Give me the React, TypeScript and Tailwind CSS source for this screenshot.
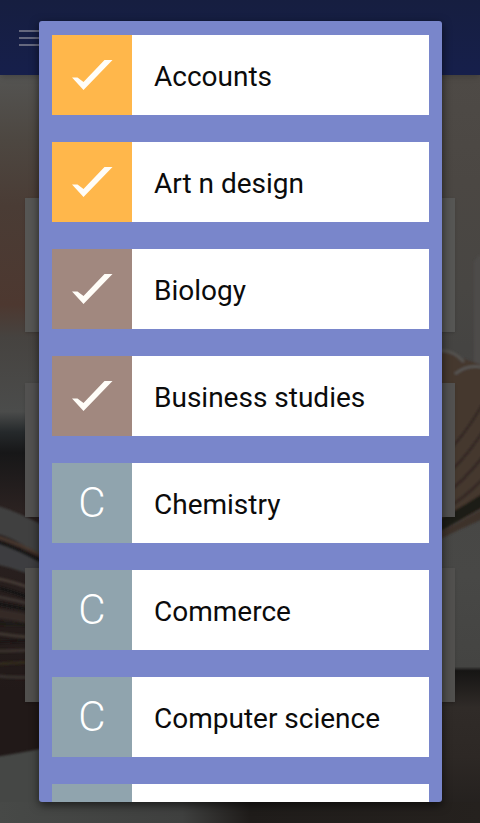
import { useState } from 'react';

interface Subject {
    name: string;
    letter: string;
    color: string;
    checked: boolean;
}

const initialSubjects: Subject[] = [
    { name: 'Accounts', letter: 'A', color: 'bg-[#ffb74b]', checked: true },
    { name: 'Art n design', letter: 'A', color: 'bg-[#ffb74b]', checked: true },
    { name: 'Biology', letter: 'B', color: 'bg-[#a1887f]', checked: true },
    { name: 'Business studies', letter: 'B', color: 'bg-[#a1887f]', checked: true },
    { name: 'Chemistry', letter: 'C', color: 'bg-[#90a4ae]', checked: false },
    { name: 'Commerce', letter: 'C', color: 'bg-[#90a4ae]', checked: false },
    { name: 'Computer science', letter: 'C', color: 'bg-[#90a4ae]', checked: false },
    { name: '', letter: '', color: 'bg-[#90a4ae]', checked: false },
];

const CheckIcon = () => (
    <svg className="w-20 h-20" viewBox="0 0 80 80" fill="#fffdf8" aria-hidden="true">
        <path d="M20 42.5H25.5L31.5 47L52.5 25H60.5L31.5 55Z" />
    </svg>
);

// open book lying on a table, out of focus
const BookBackdrop = () => (
    <svg className="absolute inset-0 w-full h-full" viewBox="0 0 480 823" preserveAspectRatio="none" aria-hidden="true">
        <defs>
            <linearGradient id="wallLeft" x1="0" y1="0" x2="0" y2="1">
                <stop offset="0.09" stopColor="#545452" />
                <stop offset="0.17" stopColor="#4d4741" />
                <stop offset="0.25" stopColor="#4a3c35" />
                <stop offset="0.37" stopColor="#4d3830" />
                <stop offset="0.41" stopColor="#464340" />
                <stop offset="0.5" stopColor="#4b4c4b" />
                <stop offset="0.525" stopColor="#25292b" />
                <stop offset="0.55" stopColor="#171718" />
                <stop offset="0.62" stopColor="#2b2221" />
                <stop offset="0.84" stopColor="#211918" />
                <stop offset="0.93" stopColor="#211918" />
            </linearGradient>
            <linearGradient id="wallRight" x1="0" y1="0" x2="0" y2="1">
                <stop offset="0.09" stopColor="#4e4a46" />
                <stop offset="0.22" stopColor="#4b4743" />
                <stop offset="0.35" stopColor="#484643" />
                <stop offset="0.42" stopColor="#454442" />
                <stop offset="0.7" stopColor="#484846" />
                <stop offset="0.81" stopColor="#444442" />
                <stop offset="0.815" stopColor="#161514" />
                <stop offset="0.86" stopColor="#302b28" />
                <stop offset="0.92" stopColor="#2d2825" />
                <stop offset="1" stopColor="#211e1c" />
            </linearGradient>
            <linearGradient id="table" x1="0" y1="0" x2="1" y2="0">
                <stop offset="0" stopColor="#474947" />
                <stop offset="0.38" stopColor="#3f403f" />
                <stop offset="0.52" stopColor="#1f1c1a" />
                <stop offset="1" stopColor="#25211e" />
            </linearGradient>
            <filter id="soft" x="-10%" y="-10%" width="120%" height="120%">
                <feGaussianBlur stdDeviation="1.2" />
            </filter>
        </defs>
        <rect width="240" height="823" fill="url(#wallLeft)" />
        <rect x="240" width="240" height="823" fill="url(#wallRight)" />
        <g filter="url(#soft)">
            <path d="M-5 505Q25 514 50 530V565Q22 540 -5 533Z" fill="#3f403f" />
            <path d="M-5 542Q22 550 50 568V583Q22 570 -5 564Z" fill="#3c3e3f" />
            <g fill="none" strokeWidth="3">
                <path d="M-5 536Q20 544 42 556" stroke="#48392f" />
                <path d="M-5 541Q20 549 42 562" stroke="#151414" />
                <path d="M-5 578Q15 582 30 588" stroke="#443b36" />
                <path d="M-5 587Q15 592 30 598" stroke="#161515" />
                <path d="M-5 596Q15 600 30 604" stroke="#3d3632" />
                <path d="M-5 603Q15 607 30 610" stroke="#171514" />
                <path d="M-5 613Q15 616 30 619" strokeWidth="9" stroke="#342b28" />
                <path d="M-5 624Q15 624 30 625" stroke="#1f1a19" />
                <path d="M-5 633Q15 636 30 637" stroke="#3f3731" />
                <path d="M-5 642Q15 641 30 640" stroke="#1a1716" />
                <path d="M-5 651Q15 651 30 650" stroke="#3b332d" />
                <path d="M-5 664Q15 663 30 662" stroke="#33291f" />
                <path d="M-5 676Q15 678 30 677" stroke="#38332e" />
            </g>
            <path d="M-5 757Q20 753 50 747L240 805V830H-5Z" fill="#444644" />
            <path d="M474 262Q478 254 485 254V430H474Z" fill="#4d4b49" />
            <path d="M438 350L485 366V506Q465 520 438 530Z" fill="#45372f" />
            <g fill="none" strokeWidth="3" stroke="#352a25">
                <path d="M438 462Q464 438 485 400" />
                <path d="M438 482Q464 462 485 428" />
                <path d="M438 500Q464 482 485 454" />
                <path d="M438 514Q464 499 485 477" />
            </g>
            <path d="M440 351Q452 349 464 362" fill="none" stroke="#55524f" strokeWidth="3" />
            <path d="M455 374Q468 363 485 368" fill="none" stroke="#575552" strokeWidth="3" />
            <path d="M438 520Q462 507 485 492V506Q460 520 438 533Z" fill="#1f1b19" />
            <path d="M438 533Q462 521 485 508V518Q462 528 438 540Z" fill="#3d322b" />
        </g>
        <rect y="802" width="480" height="21" fill="url(#table)" />
    </svg>
);

const Home = () => (
    <div className="relative flex flex-col w-full h-full overflow-hidden">
        <BookBackdrop />
        <header className="relative flex items-center h-[75px] shrink-0 px-[19px] bg-linear-to-b from-[#161e40] to-[#161f4b] shadow-md">
            <button type="button" aria-label="Open menu" className="flex flex-col gap-[5px] w-8">
                <span className="h-[2px] bg-[#65687e]"></span>
                <span className="h-[2px] bg-[#65687e]"></span>
                <span className="h-[2px] bg-[#65687e]"></span>
            </button>
        </header>
        <main className="relative flex flex-col gap-[51px] px-[25px] pt-[123px]">
            <div className="h-[134px] bg-[#565654] shadow-sm"></div>
            <div className="h-[134px] bg-[#525150] shadow-sm"></div>
            <div className="h-[134px] bg-[#51504e] shadow-sm"></div>
        </main>
    </div>
);

interface SubjectRowProps {
    subject: Subject;
    onToggle: () => void;
}

const SubjectRow = ({ subject, onToggle }: SubjectRowProps) => (
    <li className="shrink-0">
        <label className="relative flex h-20 bg-white cursor-pointer">
            <input type="checkbox" className="sr-only" checked={subject.checked} onChange={onToggle} />
            <span className={`flex items-center justify-center w-20 shrink-0 ${subject.color}`}>
                {subject.checked
                    ? <CheckIcon />
                    : <span className="text-[42px] leading-none font-light text-white">{subject.letter}</span>}
            </span>
            <span className="flex items-center pl-[22px] pt-1 text-[28px] text-[#0b0b0b]">{subject.name}</span>
        </label>
    </li>
);

export default function App() {
    const [subjects, setSubjects] = useState<Subject[]>(initialSubjects);

    const toggle = (index: number) => {
        setSubjects(subjects.map((s, i) => (i === index ? { ...s, checked: !s.checked } : s)));
    };

    return (
        <div className="relative h-screen overflow-hidden bg-[#2b2725] font-[Roboto,sans-serif]">
            <Home />
            <div role="dialog" aria-label="Subjects" className="absolute inset-0 flex pl-[39px] pr-[38px] py-[21px]">
                <ul className="flex flex-col flex-1 gap-[27px] px-[13px] py-[14px] overflow-hidden rounded-[3px] bg-[#7986cb] shadow-[0_3px_10px_rgba(0,0,0,0.6)]">
                    {subjects.map((subject, index) => (
                        <SubjectRow key={index} subject={subject} onToggle={() => toggle(index)} />
                    ))}
                </ul>
            </div>
        </div>
    );
}
